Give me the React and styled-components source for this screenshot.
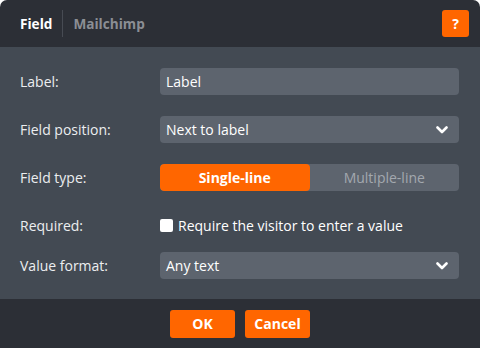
import styled, { createGlobalStyle } from 'styled-components';

const GlobalStyle = createGlobalStyle`
  html, body {
    margin: 0;
    padding: 0;
    background: #fff;
  }
  body {
    font-family: 'Open Sans', 'Noto Sans', sans-serif;
    -webkit-font-smoothing: antialiased;
  }
`;

const Chevron = () => (
  <svg width="12" height="8" viewBox="0 0 12 8" fill="none">
    <path d="M1.5 1.5L6 6L10.5 1.5" stroke="#fff" strokeWidth="2.6" strokeLinecap="round" strokeLinejoin="round" />
  </svg>
);

const App = () => (
  <>
    <GlobalStyle />
    <Dialog>
      <Header>
        <Tabs>
          <Tab $active>Field</Tab>
          <Divider />
          <Tab>Mailchimp</Tab>
        </Tabs>
        <HelpButton type="button">?</HelpButton>
      </Header>
      <Body>
        <Row>
          <Label>Label:</Label>
          <Input defaultValue="Label" />
        </Row>
        <Row>
          <Label>Field position:</Label>
          <Select>
            <span>Next to label</span>
            <Chevron />
          </Select>
        </Row>
        <Row>
          <Label>Field type:</Label>
          <Segmented>
            <Segment $active>Single-line</Segment>
            <Segment>Multiple-line</Segment>
          </Segmented>
        </Row>
        <Row $height={40}>
          <Label>Required:</Label>
          <Check>
            <Box />
            Require the visitor to enter a value
          </Check>
        </Row>
        <Row $height={27}>
          <Label>Value format:</Label>
          <Select>
            <span>Any text</span>
            <Chevron />
          </Select>
        </Row>
      </Body>
      <Footer>
        <Button type="button" $width={65}>OK</Button>
        <Button type="button" $width={65}>Cancel</Button>
      </Footer>
    </Dialog>
  </>
);

export default App;

const Dialog = styled.div`
  width: 480px;
  height: 348px;
  display: flex;
  flex-direction: column;
  border-radius: 7px 7px 0 0;
  overflow: hidden;
  background: #2c2f36;
`;

const Header = styled.div`
  height: 47px;
  display: flex;
  align-items: center;
  justify-content: space-between;
  padding: 0 11px 0 20px;
  box-sizing: border-box;
`;

const Tabs = styled.div`
  display: flex;
  align-items: center;
  gap: 10px;
`;

const Tab = styled.div`
  font-size: 13.6px;
  font-weight: 700;
  color: ${(p) => (p.$active ? '#fff' : '#8b8e94')};
`;

const Divider = styled.div`
  width: 1px;
  height: 27px;
  background: #474b53;
`;

const HelpButton = styled.button`
  width: 27px;
  height: 27px;
  border: none;
  border-radius: 3px;
  background: #ff6600;
  color: #fff;
  font-family: inherit;
  font-size: 14px;
  font-weight: 700;
  padding: 0;
`;

const Body = styled.div`
  background: #434a53;
  padding: 21px 21px 20px 20px;
  display: flex;
  flex-direction: column;
`;

const Row = styled.div`
  height: ${(p) => p.$height || 48}px;
  display: flex;
  align-items: flex-start;
`;

const Label = styled.div`
  width: 140px;
  height: 27px;
  display: flex;
  align-items: center;
  font-size: 14px;
  color: #eceef0;
`;

const Field = styled.div`
  flex: 1;
  height: 27px;
  box-sizing: border-box;
  border-radius: 4px;
  background: #5d646e;
`;

const Input = styled(Field).attrs({ as: 'input' })`
  border: none;
  outline: none;
  padding: 0 6px;
  font-family: inherit;
  font-size: 14px;
  color: #fff;
`;

const Select = styled(Field)`
  display: flex;
  align-items: center;
  justify-content: space-between;
  padding: 0 11px 0 6px;
  font-size: 14px;
  color: #fff;
`;

const Segmented = styled(Field)`
  display: flex;
  overflow: hidden;
`;

const Segment = styled.div`
  flex: 1;
  display: flex;
  align-items: center;
  justify-content: center;
  font-size: 14px;
  font-weight: ${(p) => (p.$active ? 700 : 400)};
  color: ${(p) => (p.$active ? '#fff' : '#a3a8ae')};
  background: ${(p) => (p.$active ? '#ff6600' : 'transparent')};
  border-radius: ${(p) => (p.$active ? '4px' : '0')};
`;

const Check = styled.label`
  height: 27px;
  display: flex;
  align-items: center;
  gap: 5px;
  font-size: 14px;
  color: #fff;
`;

const Box = styled.span`
  width: 13px;
  height: 13px;
  border-radius: 2px;
  background: #fff;
`;

const Footer = styled.div`
  flex: 1;
  display: flex;
  align-items: center;
  justify-content: center;
  gap: 10px;
`;

const Button = styled.button`
  width: ${(p) => p.$width}px;
  height: 28px;
  border: none;
  border-radius: 3px;
  background: #ff6600;
  color: #fff;
  font-family: inherit;
  font-size: 14px;
  font-weight: 700;
  padding: 0;
`;
